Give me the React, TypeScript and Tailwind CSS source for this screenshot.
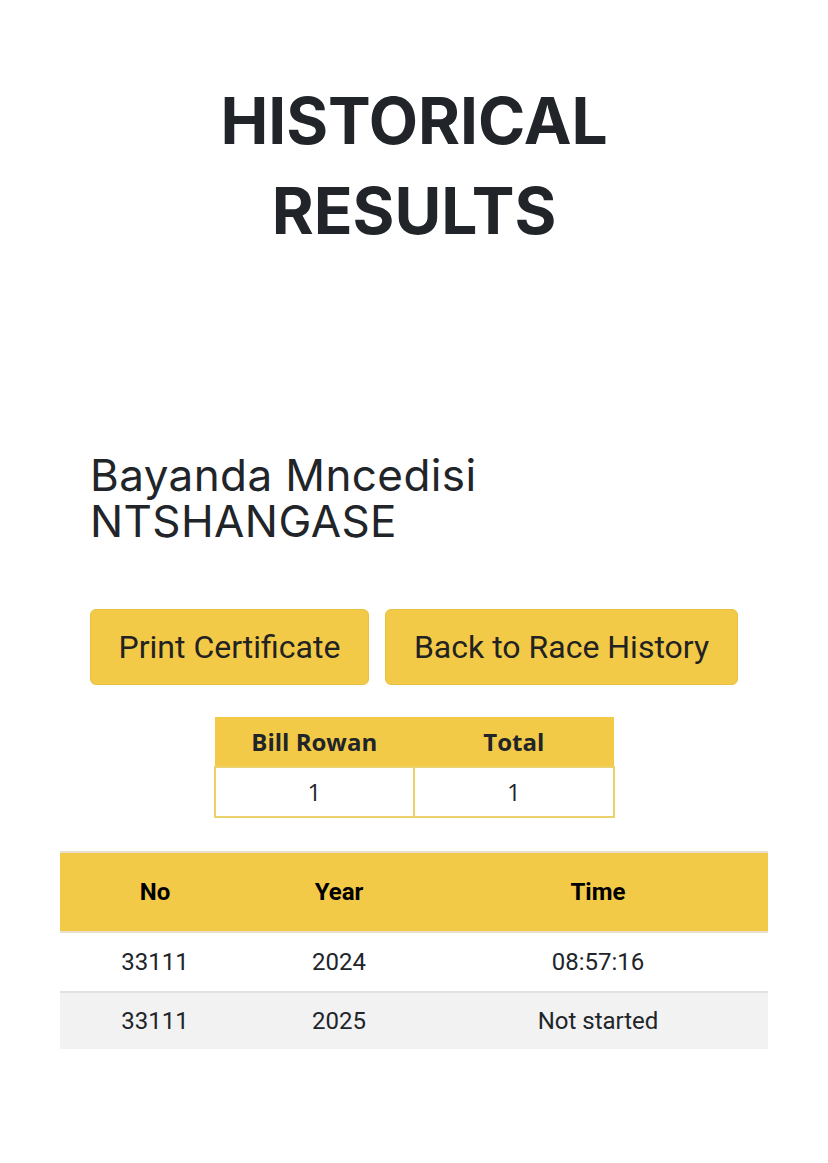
const results = [
  { no: '33111', year: '2024', time: '08:57:16' },
  { no: '33111', year: '2025', time: 'Not started' },
];

export default function App() {
  return (
    <div className="min-h-[1163px] bg-white text-[#212529]">
      {/* Title */}
      <h1 className="pt-[76px] text-center font-['Inter',sans-serif] text-[64px] font-bold leading-[90px]">
        HISTORICAL
        <br />
        RESULTS
      </h1>

      <div className="mx-[60px] mt-[196px]">
        {/* Runner */}
        <div className="px-[30px]">
          <h2 className="font-['Inter',sans-serif] text-[44px] font-normal leading-[46px] tracking-[0.4px]">
            Bayanda Mncedisi
            <br />
            NTSHANGASE
          </h2>

          {/* Actions */}
          <div className="mt-[65px] flex gap-4">
            <button className="h-[76px] w-[279px] rounded-md border border-[#e8c144] bg-[#f3ca47] font-['Roboto',sans-serif] text-[32px] text-[#222]">
              Print Certificate
            </button>
            <button className="h-[76px] w-[353px] rounded-md border border-[#e8c144] bg-[#f3ca47] font-['Roboto',sans-serif] text-[32px] text-[#222]">
              Back to Race History
            </button>
          </div>
        </div>

        {/* Summary */}
        <table className="mx-auto mt-8 w-[401px] border-collapse font-['Open_Sans',sans-serif] text-[24px]">
          <thead>
            <tr className="h-[50px] bg-[#f3ca47]">
              <th className="w-1/2 font-bold">Bill Rowan</th>
              <th className="w-1/2 font-bold">Total</th>
            </tr>
          </thead>
          <tbody>
            <tr className="h-[50px]">
              <td className="border-2 border-[#ecd06a] text-center">1</td>
              <td className="border-2 border-[#ecd06a] text-center">1</td>
            </tr>
          </tbody>
        </table>

        {/* Race history */}
        <table className="mt-[33px] w-full border-collapse font-['Roboto',sans-serif] text-[24px]">
          <thead>
            <tr className="h-[80px] border-t-2 border-b-2 border-t-[#e6e0cc] border-b-[#e6e0cc] bg-[#f3ca47] text-black">
              <th className="w-[190px] font-bold">No</th>
              <th className="w-[178px] font-bold">Year</th>
              <th className="font-bold">Time</th>
            </tr>
          </thead>
          <tbody>
            {results.map((r, i) => (
              <tr
                key={r.year}
                className={i % 2 === 1 ? 'h-[57px] bg-[#f2f2f2]' : 'h-[60px] border-b-2 border-[#e2e2e2] bg-white'}
              >
                <td className="text-center">{r.no}</td>
                <td className="text-center">{r.year}</td>
                <td className="text-center">{r.time}</td>
              </tr>
            ))}
          </tbody>
        </table>
      </div>
    </div>
  );
}
